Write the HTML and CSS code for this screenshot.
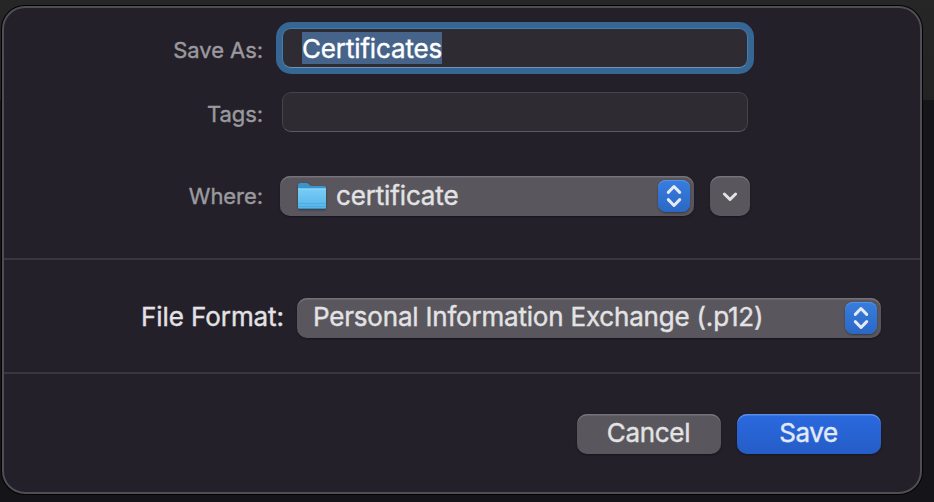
FILE: index.html
```
<!DOCTYPE html>
<html lang="en">
<head>
<meta charset="utf-8">
<title>Save</title>
<link rel="stylesheet" href="styles.css">
</head>
<body>
<main class="dialog">
  <section class="location">
    <div class="row row-name">
      <span class="label">Save As:</span>
      <div class="field focused"><span class="selection">Certificates</span></div>
    </div>
    <div class="row row-tags">
      <span class="label">Tags:</span>
      <div class="field"></div>
    </div>
    <div class="row row-where">
      <span class="label">Where:</span>
      <div class="popup">
        <svg class="folder" width="30" height="28" viewBox="0 0 30 28">
          <defs>
            <linearGradient id="front" x1="0" y1="0" x2="0" y2="1">
              <stop offset="0" stop-color="#78cdf7"/>
              <stop offset="1" stop-color="#55b3e8"/>
            </linearGradient>
          </defs>
          <path d="M1 3.5Q1 1 3 1H9.5Q10.7 1 11.6 2L12.6 3Q13.5 4 15 4H27.5Q29 4 29 5.8V12H1Z" fill="#3b94cc"/>
          <path d="M1 6.5H29V25.2Q29 27 27.2 27H2.8Q1 27 1 25.2Z" fill="url(#front)"/>
          <path d="M1 7H29" stroke="#8fd9fb"/>
          <path d="M1 21.5H29M1 24.5H29" stroke="#46a2d8" stroke-width=".6"/>
          <path d="M1.5 26.5H28.5" stroke="#3c8fc4"/>
        </svg>
        <span class="popup-text">certificate</span>
        <span class="stepper"><svg width="32" height="32" viewBox="0 0 32 32"><path d="M10.3 12.4L16 6.5L21.7 12.4M10.3 19.6L16 25.5L21.7 19.6"/></svg></span>
      </div>
      <button class="expand" aria-label="Expand"><svg width="40" height="40" viewBox="0 0 40 40"><path d="M14.4 18L20 23.5L25.6 18"/></svg></button>
    </div>
  </section>
  <section class="format">
    <span class="format-label">File Format:</span>
    <div class="popup">
      <span class="popup-text">Personal Information Exchange (.p12)</span>
      <span class="stepper"><svg width="32" height="32" viewBox="0 0 32 32"><path d="M10.3 12.4L16 6.5L21.7 12.4M10.3 19.6L16 25.5L21.7 19.6"/></svg></span>
    </div>
  </section>
  <footer class="actions">
    <button class="button"><span>Cancel</span></button>
    <button class="button primary"><span>Save</span></button>
  </footer>
</main>
</body>
</html>
```
FILE: styles.css
```
* {
  box-sizing: border-box;
}

body {
  margin: 0;
  height: 502px;
  padding: 6px 12px 8px 2px;
  overflow: hidden;
  background: linear-gradient(#262627 0, #232324 100px, #151418 100px, #151418 100%);
  font-family: Inter, "Liberation Sans", sans-serif;
  font-size: 26px;
  color: #e3e2e4;
  -webkit-text-stroke: 0.4px;
}

.dialog {
  height: 488px;
  border: 2px solid #504e54;
  border-radius: 23px;
  background: #232029;
  box-shadow: 0 0 0 1px #020203;
}

.location {
  height: 252px;
  padding-top: 20px;
  border-bottom: 2px solid #39363e;
}

.row {
  display: flex;
  height: 40px;
}

.row-name {
  margin-bottom: 24px;
}

.row-tags {
  margin-bottom: 44px;
}

.label {
  width: 260px;
  padding: 2px 1px 0 0;
  text-align: right;
  font-size: 22px;
  line-height: 40px;
  letter-spacing: -0.07px;
  color: #9b999e;
}

.row-where .label {
  padding-top: 0;
}

.field {
  width: 466px;
  margin-left: 18px;
  padding: 4px 20px;
  border: 1px solid #46434a;
  border-bottom-color: #5c5a60;
  border-radius: 9px;
  background: #2e2b32;
}

.field.focused {
  padding: 3px 19px;
  border-color: #4a7aa9;
  border-bottom-color: #6e92b8;
  box-shadow: 0 0 0 6px #366693;
}

.selection {
  display: block;
  width: 140px;
  height: 32px;
  line-height: 33px;
  letter-spacing: -0.15px;
  background: #466489;
  color: #fff;
}

.popup {
  display: flex;
  align-items: center;
  height: 40px;
  border-radius: 10px;
  background: #59575d;
  box-shadow: inset 0 1.5px 0 #757379, 0 1px 2px #17151b;
}

.popup-text {
  flex: 1;
  padding-bottom: 3px;
  line-height: 37px;
  letter-spacing: -0.15px;
  white-space: nowrap;
}

.row-where .popup {
  width: 414px;
  margin-left: 16px;
  padding: 0 4px 0 17px;
}

.row-where .popup-text {
  padding-bottom: 1px;
}

.folder {
  margin-right: 9px;
  filter: drop-shadow(0 1px 1px #39373d);
}

.stepper {
  width: 32px;
  height: 32px;
  border-radius: 8px;
  background: linear-gradient(#377ddf, #2b68c5);
  box-shadow: inset 0 1px 0 #5592e5, 0 1px 2px #39373f;
}

svg {
  display: block;
}

.stepper path,
.expand path {
  fill: none;
  stroke: #e5eaf4;
  stroke-width: 3;
  stroke-linecap: round;
  stroke-linejoin: round;
}

.expand {
  width: 40px;
  height: 40px;
  margin-left: 16px;
  padding: 0;
  border: 0;
  border-radius: 10px;
  background: #59575d;
  box-shadow: inset 0 1.5px 0 #757379, 0 1px 2px #17151b;
}

.expand path {
  stroke: #e3e2e4;
}

.format {
  display: flex;
  height: 114px;
  padding: 38px 39px 0 136px;
  border-bottom: 2px solid #39363e;
}

.format-label {
  width: 157px;
  padding-left: 1px;
  line-height: 37px;
  letter-spacing: -0.08px;
  white-space: nowrap;
}

.format .popup {
  width: 584px;
  padding: 0 4px 0 16px;
}

.format .popup-text {
  letter-spacing: -0.2px;
}

.actions {
  display: flex;
  justify-content: flex-end;
  gap: 16px;
  padding: 40px 39px 0 0;
}

.button {
  width: 144px;
  height: 40px;
  padding: 0 1px 3px 0;
  border: 0;
  border-radius: 10px;
  background: #59575d;
  box-shadow: inset 0 1.5px 0 #757379, 0 1px 2px #17151b;
  font: inherit;
  -webkit-text-stroke: inherit;
  line-height: 37px;
  letter-spacing: -0.3px;
  color: #e3e2e4;
}

.primary {
  background: linear-gradient(#2b69df, #255dc7);
  box-shadow: inset 0 1.5px 0 #5b8ce7, 0 1px 2px #17151b;
  letter-spacing: -0.4px;
  color: #e2e9f8;
}
```
